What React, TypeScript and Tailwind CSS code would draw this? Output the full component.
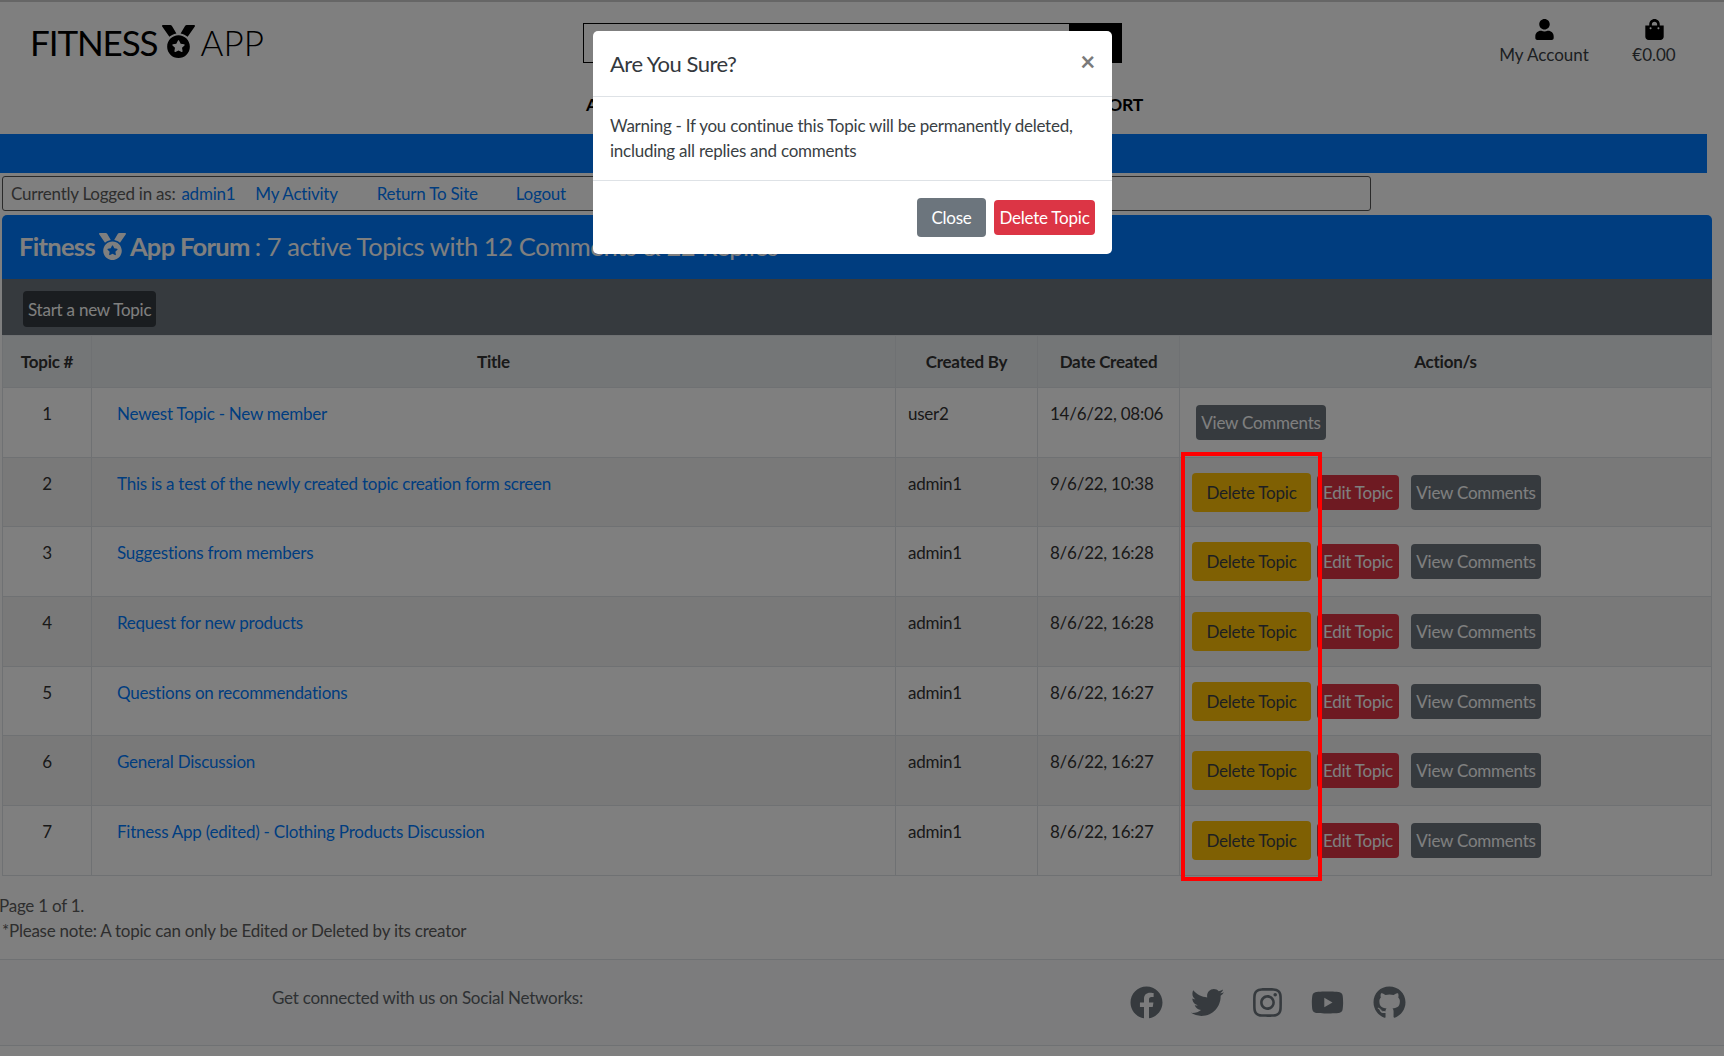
import { FaFacebook, FaGithub, FaInstagram, FaMedal, FaShoppingBag, FaTwitter, FaUser, FaYoutube } from 'react-icons/fa';

const topics = [
  { id: 1, title: 'Newest Topic - New member', by: 'user2', date: '14/6/22, 08:06', owner: false },
  { id: 2, title: 'This is a test of the newly created topic creation form screen', by: 'admin1', date: '9/6/22, 10:38', owner: true },
  { id: 3, title: 'Suggestions from members', by: 'admin1', date: '8/6/22, 16:28', owner: true },
  { id: 4, title: 'Request for new products', by: 'admin1', date: '8/6/22, 16:28', owner: true },
  { id: 5, title: 'Questions on recommendations', by: 'admin1', date: '8/6/22, 16:27', owner: true },
  { id: 6, title: 'General Discussion', by: 'admin1', date: '8/6/22, 16:27', owner: true },
  { id: 7, title: 'Fitness App (edited) - Clothing Products Discussion', by: 'admin1', date: '8/6/22, 16:27', owner: true },
];

const App = () => {
  return (
    <div className="relative h-[1056px] w-[1724px] overflow-hidden bg-white font-['Lato','Liberation_Sans',sans-serif] text-[17px] leading-[25px] tracking-[-0.24px] text-[#3a3f44]">
      <header className="h-[134px] border-t-2 border-[#ccc]">
        <div className="flex h-[78px]">
          <div className="flex w-[583px] items-start pl-[30px] pt-[19px]">
            <span className="text-[35px] font-normal leading-[42px] tracking-[-1.1px] text-black">FITNESS</span>
            <FaMedal className="ml-[5px] mr-[5px] mt-[4px] text-[33px] text-black" />
            <span className="text-[35px] font-light leading-[42px] tracking-normal text-black">APP</span>
          </div>
          <div className="mt-[21px] flex h-[40px] w-[539px]">
            <div className="flex-1 border border-black bg-white" />
            <div className="w-[52px] bg-black" />
          </div>
          <div className="flex flex-1 pt-[17px]">
            <div className="ml-[377px] flex w-[90px] flex-col items-center">
              <FaUser className="text-[21px] text-black" />
              <span className="mt-[4px] whitespace-nowrap text-[17px] leading-[22px] tracking-normal">My Account</span>
            </div>
            <div className="ml-[20px] flex w-[90px] flex-col items-center">
              <FaShoppingBag className="text-[21px] text-black" />
              <span className="mt-[4px] text-[17px] leading-[22px] tracking-normal">€0.00</span>
            </div>
          </div>
        </div>
        <nav className="ml-[586px] flex w-[557px] justify-between pt-[12px] text-[17.6px] font-bold text-black">
          <span>ALL PRODUCTS</span>
          <span>CLOTHING</span>
          <span>SPECIAL OFFERS</span>
          <span>SUPPORT</span>
        </nav>
      </header>

      <div className="h-[39px] w-[1707px] bg-[#007bff]" />

      <div className="ml-[2px] mt-[3px] flex h-[35px] w-[1369px] items-center rounded-[3px] border border-[#555] pl-[8px] text-[#5c5c5c]">
        <span>Currently Logged in as:</span>
        <a className="ml-[6px] text-[#007bff]">admin1</a>
        <a className="ml-[20px] text-[#007bff]">My Activity</a>
        <a className="ml-[39px] text-[#007bff]">Return To Site</a>
        <a className="ml-[38px] text-[#007bff]">Logout</a>
      </div>

      <section className="ml-[2px] mt-[4px] w-[1710px]">
        <div className="flex h-[64px] items-center rounded-t-[5px] bg-[#007bff] pb-[1px] pl-[17px] text-[25.5px] tracking-[-0.4px] text-white">
          <span className="flex items-center font-bold tracking-[-0.7px]">
            Fitness
            <FaMedal className="mx-[4px] text-[27px]" />
            App Forum
          </span>
          <span className="ml-[5px]">: 7 active Topics with 12 Comments &amp; 22 Replies</span>
        </div>
        <div className="flex h-[56px] items-center bg-[#6c757d] pl-[21px] pt-[4px]">
          <button className="h-[36px] rounded-[4px] bg-[#343a40] px-[5px] text-white">Start a new Topic</button>
        </div>
        <table className="w-full table-fixed border-collapse border border-[#dee2e6] text-[#333]">
          <colgroup>
            <col className="w-[89px]" />
            <col className="w-[804px]" />
            <col className="w-[142px]" />
            <col className="w-[142px]" />
            <col />
          </colgroup>
          <thead>
            <tr className="h-[52px] bg-[#e9ecef] font-bold">
              <th className="border border-[#dee2e6]">Topic #</th>
              <th className="border border-[#dee2e6]">Title</th>
              <th className="border border-[#dee2e6]">Created By</th>
              <th className="border border-[#dee2e6]">Date Created</th>
              <th className="border border-[#dee2e6]">Action/s</th>
            </tr>
          </thead>
          <tbody>
            {topics.map((topic, index) => (
              <tr key={topic.id} className={`h-[69.7px] ${index % 2 === 0 ? 'bg-white' : 'bg-[#f2f2f2]'}`}>
                <td className="border border-[#dee2e6] pt-[13px] text-center align-top">{topic.id}</td>
                <td className="border border-[#dee2e6] pl-[25px] pt-[13px] align-top text-[#007bff]">{topic.title}</td>
                <td className="border border-[#dee2e6] pl-[12px] pt-[13px] align-top">{topic.by}</td>
                <td className="border border-[#dee2e6] pl-[12px] pt-[13px] align-top">{topic.date}</td>
                <td className="border border-[#dee2e6] pl-[12px] align-middle">
                  {topic.owner ? (
                    <div className="flex items-center">
                      <button className="h-[39px] w-[119px] rounded-[4px] bg-[#ffc107] text-[#3a3f44]">Delete Topic</button>
                      <button className="ml-[6px] h-[35px] w-[82px] rounded-[4px] bg-[#dc3545] text-white">Edit Topic</button>
                      <button className="ml-[12px] h-[35px] w-[130px] rounded-[4px] bg-[#6c757d] text-white">View Comments</button>
                    </div>
                  ) : (
                    <button className="ml-[4px] h-[35px] w-[130px] rounded-[4px] bg-[#6c757d] text-white">View Comments</button>
                  )}
                </td>
              </tr>
            ))}
          </tbody>
        </table>
      </section>

      <p className="-ml-[1px] mt-[17px] text-[#5c5c5c]">Page 1 of 1.</p>
      <p className="ml-[2px] text-[#5c5c5c]">*Please note: A topic can only be Edited or Deleted by its creator</p>

      <footer className="mt-[16px] h-[87px] border-y border-[#dee2e6] bg-[#f8f9fa]">
        <div className="flex items-start pt-[25px]">
          <span className="ml-[272px] w-[844px] text-[#5c6267]">Get connected with us on Social Networks:</span>
          <div className="flex items-center pt-[1px] text-[33px] text-[#6c757d]">
            <span className="flex w-[61px] justify-center"><FaFacebook /></span>
            <span className="flex w-[60px] justify-center"><FaTwitter /></span>
            <span className="flex w-[60px] justify-center"><FaInstagram /></span>
            <span className="flex w-[61px] justify-center"><FaYoutube /></span>
            <span className="flex w-[63px] justify-center"><FaGithub /></span>
          </div>
        </div>
      </footer>

      {/* backdrop and dialog sit over the page */}
      <div className="absolute inset-0 bg-black/50" />

      <div className="absolute left-[593px] top-[31px] h-[223px] w-[519px] rounded-[5px] bg-white">
        <div className="flex h-[66px] items-start justify-between border-b border-[#dee2e6] pl-[17px] pr-[17px] pt-[19px]">
          <h5 className="text-[22px] leading-[28px] tracking-[-0.5px] text-[#33383d]">Are You Sure?</h5>
          <span className="text-[26px] font-bold leading-[22px] text-[#7a7a7a]">×</span>
        </div>
        <div className="h-[84px] border-b border-[#dee2e6] px-[17px] pt-[16px] leading-[25px]">
          Warning - If you continue this Topic will be permanently deleted, including all replies and comments
        </div>
        <div className="flex h-[73px] items-center justify-end gap-[8px] pr-[17px]">
          <button className="h-[39px] w-[69px] rounded-[4px] bg-[#6c757d] text-white">Close</button>
          <button className="h-[35px] w-[101px] rounded-[4px] bg-[#dc3545] text-white">Delete Topic</button>
        </div>
      </div>

      {/* red highlight drawn on the screenshot */}
      <div className="absolute left-[1181px] top-[452px] h-[429px] w-[141px] border-[4px] border-[#ff0000]" />
    </div>
  );
};

export default App;
